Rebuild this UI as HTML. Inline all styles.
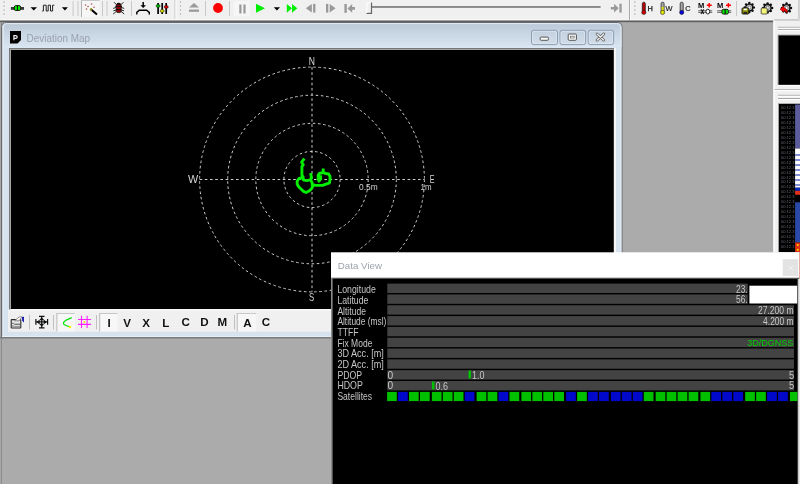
<!DOCTYPE html>
<html><head><meta charset="utf-8">
<style>
html,body{margin:0;padding:0;width:800px;height:484px;overflow:hidden;background:#ababab;}
svg{display:block;position:absolute;left:0;top:0;will-change:transform;}
text{font-family:"Liberation Sans",sans-serif;}
</style></head>
<body>
<svg width="800" height="484" viewBox="0 0 800 484">
<defs>
<linearGradient id="frameg" gradientUnits="userSpaceOnUse" x1="0" y1="24" x2="0" y2="47">
<stop offset="0" stop-color="#bccad8"/><stop offset="1" stop-color="#d9e5f1"/>
</linearGradient>
<linearGradient id="btng" x1="0" y1="0" x2="0" y2="1">
<stop offset="0" stop-color="#c3d0de"/><stop offset="1" stop-color="#d2dde9"/>
</linearGradient>
</defs>

<!-- MDI background -->
<rect x="0" y="0" width="800" height="484" fill="#ababab"/>

<rect x="0.9" y="21" width="1.1" height="463" fill="#8c8c8c"/>
<!-- ===== TOP TOOLBAR ===== -->
<g id="toolbar">
<rect x="0" y="0" width="800" height="19" fill="#f0f0f0"/>
<rect x="0" y="19" width="774" height="1" fill="#f7f7f7"/>
<rect x="0" y="20" width="774" height="1" fill="#a4a4a4"/>
<rect x="0" y="21" width="774" height="1.2" fill="#5f5f5f"/>

<!-- grippers -->
<rect x="4.4" y="2.4" width="1.1" height="1.1" fill="#fdfdfd"/><rect x="3.6" y="1.6" width="1.1" height="1.1" fill="#8c8c8c"/>
<rect x="4.4" y="6.4" width="1.1" height="1.1" fill="#fdfdfd"/><rect x="3.6" y="5.6" width="1.1" height="1.1" fill="#8c8c8c"/>
<rect x="4.4" y="10.4" width="1.1" height="1.1" fill="#fdfdfd"/><rect x="3.6" y="9.6" width="1.1" height="1.1" fill="#8c8c8c"/>
<rect x="4.4" y="14.4" width="1.1" height="1.1" fill="#fdfdfd"/><rect x="3.6" y="13.6" width="1.1" height="1.1" fill="#8c8c8c"/>
<rect x="180.9" y="2.4" width="1.1" height="1.1" fill="#fdfdfd"/><rect x="180.1" y="1.6" width="1.1" height="1.1" fill="#8c8c8c"/>
<rect x="180.9" y="6.4" width="1.1" height="1.1" fill="#fdfdfd"/><rect x="180.1" y="5.6" width="1.1" height="1.1" fill="#8c8c8c"/>
<rect x="180.9" y="10.4" width="1.1" height="1.1" fill="#fdfdfd"/><rect x="180.1" y="9.6" width="1.1" height="1.1" fill="#8c8c8c"/>
<rect x="180.9" y="14.4" width="1.1" height="1.1" fill="#fdfdfd"/><rect x="180.1" y="13.6" width="1.1" height="1.1" fill="#8c8c8c"/>
<rect x="635.2" y="2.4" width="1.1" height="1.1" fill="#fdfdfd"/><rect x="634.4" y="1.6" width="1.1" height="1.1" fill="#8c8c8c"/>
<rect x="635.2" y="6.4" width="1.1" height="1.1" fill="#fdfdfd"/><rect x="634.4" y="5.6" width="1.1" height="1.1" fill="#8c8c8c"/>
<rect x="635.2" y="10.4" width="1.1" height="1.1" fill="#fdfdfd"/><rect x="634.4" y="9.6" width="1.1" height="1.1" fill="#8c8c8c"/>
<rect x="635.2" y="14.4" width="1.1" height="1.1" fill="#fdfdfd"/><rect x="634.4" y="13.6" width="1.1" height="1.1" fill="#8c8c8c"/>
<!-- band separators -->
<rect x="174.5" y="0" width="1" height="19" fill="#c4c4c4"/><rect x="175.5" y="0" width="1" height="19" fill="#fcfcfc"/>
<rect x="629" y="0" width="1" height="20" fill="#a8a8a8"/><rect x="630" y="0" width="1" height="20" fill="#fcfcfc"/>
<rect x="798" y="0" width="1" height="20" fill="#c8c8c8"/>
<!-- separators -->
<g fill="#c8c8c8">
<rect x="72.6" y="1" width="1" height="15"/><rect x="77.5" y="1" width="1" height="15"/>
<rect x="102" y="1" width="1" height="15"/><rect x="106.5" y="1" width="1" height="15"/>
<rect x="131" y="1" width="1" height="15"/>
<rect x="205" y="1" width="1" height="15"/>
<rect x="229" y="1" width="1" height="15"/>
<rect x="736" y="1" width="1" height="15"/>
</g>
<!-- connector icon -->
<rect x="10.9" y="7" width="13.1" height="2.8" fill="#3a3a3a"/>
<rect x="14.3" y="5.6" width="6.3" height="4.9" rx="1.5" fill="#00f000" stroke="#111" stroke-width="0.9"/>
<rect x="16.9" y="5.4" width="1.1" height="5.3" fill="#111"/>
<!-- dropdowns -->
<path d="M30.5,7.2 H37 L33.75,10.4 Z" fill="#000"/>
<path d="M61.9,7.2 H67.9 L64.9,10.4 Z" fill="#000"/>
<path d="M273.8,7.2 H280 L276.9,10.4 Z" fill="#000"/>
<!-- square wave -->
<path d="M42.2,11 H43.4 V5.2 H46.2 V11 H48.2 V5.2 H50.5 V11 H52.6 V5.2 H54.3" fill="none" stroke="#222" stroke-width="1"/>
<!-- pressed wand button -->
<rect x="81" y="0" width="18.4" height="17" fill="#f6f6f6"/>
<rect x="81" y="0" width="1" height="17" fill="#b0b0b0"/><rect x="81" y="0" width="18.4" height="1" fill="#c8c8c8"/>
<g fill="#a85050"><circle cx="85.5" cy="5" r="0.8"/><circle cx="88" cy="6.5" r="0.8"/><circle cx="91.5" cy="4" r="0.8"/><circle cx="94" cy="7.3" r="0.8"/><circle cx="86.5" cy="9" r="0.8"/></g>
<path d="M90.6,9 L97,14.6" stroke="#000" stroke-width="2"/>
<path d="M90.3,8.7 L92,10.2" stroke="#8a8a10" stroke-width="2"/>
<!-- bug -->
<path d="M114,2.2 L116.6,4.8 M123.4,2.2 L120.8,4.8 M113.2,8.4 L116.2,7.4 M124.2,8.4 L121.2,7.4 M113.4,10.8 L116.2,10 M124,10.8 L121.2,10 M113.2,14 L116.4,11.4 M124.2,14 L121,11.4" stroke="#2a2a2a" stroke-width="1"/>
<rect x="116.2" y="3.8" width="5" height="8.8" rx="1.8" fill="#960000" stroke="#111" stroke-width="0.8"/>
<ellipse cx="118.7" cy="3.7" rx="1.9" ry="1" fill="#111"/>
<rect x="115.5" y="5.9" width="6.4" height="1.1" fill="#111"/>
<rect x="116" y="9.1" width="5.4" height="1" fill="#111"/>
<!-- arrow+arc icon -->
<path d="M143.2,2 V6.5" stroke="#000" stroke-width="1.5"/>
<path d="M140.4,5.2 L143.2,7.9 L146,5.2 Z" fill="#000"/>
<path d="M136.8,14.6 V12.4 L139.3,10.3 H146.6 L149.3,12.4 V14.6" fill="none" stroke="#000" stroke-width="1.4"/>
<!-- sliders -->
<path d="M158.1,3 V14 M162.2,3 V14 M166.2,3 V14" stroke="#000" stroke-width="1.7"/>
<ellipse cx="158.1" cy="6" rx="2.1" ry="1.4" fill="#00c000" stroke="#111" stroke-width="0.5"/>
<ellipse cx="162.2" cy="11" rx="2.1" ry="1.4" fill="#e0e000" stroke="#111" stroke-width="0.5"/>
<ellipse cx="166.2" cy="7" rx="2.1" ry="1.4" fill="#e00000" stroke="#111" stroke-width="0.5"/>
<!-- eject -->
<path d="M189,7.6 L194,3 L199,7.6 Z" fill="#999"/>
<rect x="189" y="9.6" width="10" height="2.2" fill="#999"/>
<!-- record -->
<circle cx="218" cy="8" r="4.9" fill="#f00"/>
<!-- pause button -->
<rect x="233.6" y="1" width="16.2" height="15" fill="#f6f6f6"/>
<rect x="239.3" y="4.5" width="2.2" height="9" fill="#999"/>
<rect x="243.4" y="4.5" width="2.2" height="9" fill="#999"/>
<!-- play -->
<path d="M256,3.7 L265,8.2 L256,12.7 Z" fill="#00ee00"/>
<!-- ff -->
<path d="M286.8,3.9 L292,8.35 L286.8,12.8 Z M292,3.9 L297.3,8.35 L292,12.8 Z" fill="#00ee00"/>
<!-- step back -->
<path d="M311.8,3.9 L305.9,8.25 L311.8,12.6 Z" fill="#999"/><rect x="313.1" y="3.9" width="2.3" height="8.7" fill="#999"/>
<!-- step fwd -->
<rect x="326" y="3.9" width="2.3" height="8.7" fill="#999"/><path d="M329.7,3.9 L335.6,8.25 L329.7,12.6 Z" fill="#999"/>
<!-- skip start -->
<rect x="344.4" y="4" width="2.4" height="8.8" fill="#999"/>
<path d="M347.5,8.4 L352.2,3.9 V7.1 H355 V9.7 H352.2 V12.8 Z" fill="#999"/>
<!-- slider -->
<rect x="372" y="6" width="228.6" height="1.9" fill="#888"/>
<path d="M366.5,13.3 H371.5 V2.5" fill="none" stroke="#666" stroke-width="1.2"/>
<path d="M366.8,13 V3 H371" fill="none" stroke="#fff" stroke-width="1"/>
<!-- skip end -->
<path d="M618.7,8.2 L614.1,3.7 V6.9 H610.8 V9.5 H614.1 V12.6 Z" fill="#999"/>
<rect x="619.4" y="3.7" width="2.3" height="8.9" fill="#999"/>
<!-- thermometers -->
<rect x="642.3" y="2.2" width="3" height="10" rx="1.5" fill="#c00000" stroke="#222" stroke-width="0.8"/>

<circle cx="643.8" cy="12.4" r="2.1" fill="#d00000" stroke="#222" stroke-width="0.6"/>
<rect x="661.1" y="2.2" width="3" height="10" rx="1.5" fill="#aaa" stroke="#222" stroke-width="0.8"/>
<rect x="661.6" y="6.8" width="2" height="5.4" fill="#e0e000"/>
<circle cx="662.6" cy="12.4" r="2.1" fill="#e0e000" stroke="#222" stroke-width="0.6"/>
<rect x="680.2" y="2.2" width="3" height="10" rx="1.5" fill="#aaa" stroke="#222" stroke-width="0.8"/>
<circle cx="681.7" cy="12.4" r="2.1" fill="#0000e0" stroke="#222" stroke-width="0.6"/>
<text x="647.6" y="10.7" font-size="7.4" fill="#111" stroke="#111" stroke-width="0.25">H</text>
<text x="665.6" y="10.7" font-size="7.4" fill="#222" stroke="#222" stroke-width="0.2">W</text>
<text x="685.2" y="10.7" font-size="7.4" fill="#222" stroke="#222" stroke-width="0.2">C</text>
<!-- M+ icons -->
<text x="697.9" y="7.8" font-size="7" font-weight="bold" fill="#000" textLength="6.3" lengthAdjust="spacingAndGlyphs">M</text>
<path d="M709.2,3 V7.6 M706.8,5.3 H711.8" stroke="#f00" stroke-width="1.5"/>
<rect x="698.2" y="10.4" width="14" height="0.8" fill="#444"/><rect x="698.2" y="11.9" width="14" height="0.8" fill="#444"/>
<path d="M700.8,9.4 Q702.4,10.2 702.4,11.6 Q702.4,13 700.8,13.8 M703.8,9.4 Q702.6,10.2 702.6,11.6 Q702.6,13 703.8,13.8" fill="none" stroke="#111" stroke-width="1.1"/>
<ellipse cx="707.8" cy="11.6" rx="1.9" ry="2.4" fill="#fff" stroke="#111" stroke-width="0.9"/>
<text x="717.1" y="7.8" font-size="7" font-weight="bold" fill="#000" textLength="6.3" lengthAdjust="spacingAndGlyphs">M</text>
<path d="M728.4,3 V7.6 M726,5.3 H731" stroke="#f00" stroke-width="1.5"/>
<rect x="717.2" y="10.4" width="14" height="0.8" fill="#444"/><rect x="717.2" y="11.9" width="14" height="0.8" fill="#444"/>
<rect x="721.9" y="9.3" width="6.5" height="4.8" rx="1.5" fill="#00e000" stroke="#111" stroke-width="0.9"/>
<rect x="724.6" y="9.2" width="1.1" height="5" fill="#111"/>
<!-- gears -->
<circle cx="749.30" cy="3.10" r="1.25" fill="#111"/>
<circle cx="746.12" cy="4.42" r="1.25" fill="#111"/>
<circle cx="744.80" cy="7.60" r="1.25" fill="#111"/>
<circle cx="746.12" cy="10.78" r="1.25" fill="#111"/>
<circle cx="749.30" cy="12.10" r="1.25" fill="#111"/>
<circle cx="752.48" cy="10.78" r="1.25" fill="#111"/>
<circle cx="753.80" cy="7.60" r="1.25" fill="#111"/>
<circle cx="752.48" cy="4.42" r="1.25" fill="#111"/>
<circle cx="749.3" cy="7.6" r="3.4" fill="#d8d8d8" stroke="#111" stroke-width="1.3"/>
<circle cx="749.3" cy="7.6" r="1.7" fill="#f4f4f4" stroke="#777" stroke-width="0.9"/>
<circle cx="767.60" cy="3.40" r="1.25" fill="#111"/>
<circle cx="764.42" cy="4.72" r="1.25" fill="#111"/>
<circle cx="763.10" cy="7.90" r="1.25" fill="#111"/>
<circle cx="764.42" cy="11.08" r="1.25" fill="#111"/>
<circle cx="767.60" cy="12.40" r="1.25" fill="#111"/>
<circle cx="770.78" cy="11.08" r="1.25" fill="#111"/>
<circle cx="772.10" cy="7.90" r="1.25" fill="#111"/>
<circle cx="770.78" cy="4.72" r="1.25" fill="#111"/>
<circle cx="767.6" cy="7.9" r="3.4" fill="#d8d8d8" stroke="#111" stroke-width="1.3"/>
<circle cx="767.6" cy="7.9" r="1.7" fill="#f4f4f4" stroke="#777" stroke-width="0.9"/>
<circle cx="786.50" cy="3.60" r="1.25" fill="#111"/>
<circle cx="783.32" cy="4.92" r="1.25" fill="#111"/>
<circle cx="782.00" cy="8.10" r="1.25" fill="#111"/>
<circle cx="783.32" cy="11.28" r="1.25" fill="#111"/>
<circle cx="786.50" cy="12.60" r="1.25" fill="#111"/>
<circle cx="789.68" cy="11.28" r="1.25" fill="#111"/>
<circle cx="791.00" cy="8.10" r="1.25" fill="#111"/>
<circle cx="789.68" cy="4.92" r="1.25" fill="#111"/>
<circle cx="786.5" cy="8.1" r="3.4" fill="#d8d8d8" stroke="#111" stroke-width="1.3"/>
<circle cx="786.5" cy="8.1" r="1.7" fill="#f4f4f4" stroke="#777" stroke-width="0.9"/>
<rect x="742" y="8" width="6.8" height="6" rx="0.8" fill="#8c8c00" stroke="#111" stroke-width="0.9"/>
<rect x="743.6" y="8.6" width="3.6" height="1.6" fill="#fff"/>
<rect x="743.6" y="12" width="3.6" height="2" fill="#222"/>
<rect x="761.2" y="8" width="6" height="6" rx="0.8" fill="#f4f47a" stroke="#333" stroke-width="0.8"/>
<path d="M780,9.2 L784,5.8 V7.8 Q787.6,8.6 787.4,12.8 L786.2,12.8 Q785.6,10.5 784,10.4 V12.4 Z" fill="#f00" stroke="#300" stroke-width="0.3"/>
<rect x="798.5" y="0" width="1.5" height="19.5" fill="#d4d4d4"/>
</g>

<!-- ===== DEVIATION MAP WINDOW ===== -->
<g id="devwin">
<path d="M1.5,337.5 V27.5 Q1.5,22.5 6.5,22.5 H617 Q622,22.5 622,27.5 V337.5 Z" fill="#d6e2ee" stroke="#6a6a6a" stroke-width="1"/>
<path d="M2,47 V28 Q2,23 7,23 H616.5 Q621.5,23 621.5,28 V47 Z" fill="url(#frameg)"/>
<rect x="2" y="28" width="1" height="309" fill="#c4ccd6"/>
<path d="M3.3,336 V28 Q3.3,23.6 7.5,23.6 H616.5 Q620.9,23.6 620.9,28 V336" fill="none" stroke="#e2ecf8" stroke-width="1"/>
<rect x="7.4" y="46.6" width="607.6" height="1.2" fill="#dde8f3"/>
<rect x="2" y="336" width="620" height="1" fill="#e6eef6"/>
<rect x="0" y="337" width="623" height="1.5" fill="#7c7c7c"/>

<!-- title icon -->
<path d="M10,31 H21 V40 L17.5,43.5 H10 Z" fill="#000"/>
<path d="M13.9,40.2 V35.6 H15.7 Q17.2,35.6 17.2,37 Q17.2,38.4 15.7,38.4 H14.3" fill="none" stroke="#f0f0f0" stroke-width="1.2"/>
<text x="26.6" y="42" font-size="11.3" fill="#98a2ae" textLength="63.5" lengthAdjust="spacingAndGlyphs">Deviation Map</text>
<!-- caption buttons -->
<g fill="url(#btng)" stroke="#8696ad" stroke-width="0.9">
<rect x="531.5" y="30.3" width="26" height="14.3" rx="2"/>
<rect x="560" y="30.3" width="25.6" height="14.3" rx="2"/>
<rect x="588.2" y="30.3" width="25.4" height="14.3" rx="2"/>
</g>
<g fill="none" stroke="#dfe8f1" stroke-width="0.7">
<rect x="532.6" y="31.4" width="23.8" height="12.1" rx="1.5"/>
<rect x="561.1" y="31.4" width="23.4" height="12.1" rx="1.5"/>
<rect x="589.3" y="31.4" width="23.2" height="12.1" rx="1.5"/>
</g>
<rect x="540.2" y="37.1" width="8.2" height="3.2" rx="1" fill="#fafafa" stroke="#555" stroke-width="1"/>
<rect x="568.2" y="34" width="8.2" height="6.3" rx="1" fill="#fafafa" stroke="#555" stroke-width="1"/>
<rect x="570.4" y="36.2" width="3.8" height="1.8" fill="#fff" stroke="#666" stroke-width="0.7"/>
<path d="M597,34 L603.8,40.2 M603.8,34 L597,40.2" stroke="#555" stroke-width="2.6" stroke-linecap="round"/>
<path d="M597,34 L603.8,40.2 M603.8,34 L597,40.2" stroke="#fafafa" stroke-width="1.2" stroke-linecap="round"/>
<!-- map sunken border -->
<rect x="9" y="48" width="607" height="263" fill="#f6f6f6"/>
<rect x="9" y="48" width="605" height="1" fill="#787878"/>
<rect x="9" y="48" width="1" height="262" fill="#787878"/>
<rect x="10" y="49" width="604" height="1" fill="#a6a6a6"/>
<rect x="10" y="49" width="1" height="261" fill="#a6a6a6"/>
<rect x="11" y="50" width="602.8" height="259" fill="#000"/>

<!-- map content -->
<g fill="none" stroke="#cfcfcf" stroke-width="1" stroke-dasharray="2.6 2.6">
<circle cx="312" cy="179.5" r="28.1"/>
<circle cx="312" cy="179.5" r="56.2"/>
<circle cx="312" cy="179.5" r="84.3"/>
<circle cx="312" cy="179.5" r="112.4"/>
<path d="M199.6,179.5 H424.4"/>
<path d="M312,67.1 V291.9"/>
</g>
<g fill="#d4d4d4" font-size="10.2">
<text x="308.8" y="64.8" textLength="6.2" lengthAdjust="spacingAndGlyphs">N</text>
<text x="188" y="182.9" textLength="10.2" lengthAdjust="spacingAndGlyphs">W</text>
<text x="429.8" y="182.9" textLength="4.8" lengthAdjust="spacingAndGlyphs">E</text>
<text x="308.9" y="300.9" textLength="5.2" lengthAdjust="spacingAndGlyphs">S</text>
</g>
<g fill="#d0d0d0" font-size="9.1">
<text x="359" y="189.8" textLength="18.6" lengthAdjust="spacingAndGlyphs">0.5m</text>
<text x="420.6" y="189.8" textLength="11" lengthAdjust="spacingAndGlyphs">1m</text>
</g>
<path d="M303.5,159.7 L301.6,162.2 L303.3,164.7 L301.9,166.7 L301.9,175 L303.1,177.5 L299,178.5 L297.2,181 L297.2,184.2 L298.7,186.8 L301.2,189.2 L303.6,191.4 L306,192.5 L308.5,191.3 L311,189.3 L312.4,187.2 L312.4,184 L311.6,181.5 L310.4,179.8 L306.5,180.6 L303.3,179.8 L303.1,177.5 M310.9,174.5 L311.4,178 L310.4,179.8 M312.4,184.4 L315,185.4 L319,185.4 L322.5,185.4 L326,184.2 L329.4,183 L330,180 L330,176.5 L328.6,174 L326,173.5 L323.2,172.6 L323.2,170 M323.2,172.6 L319.6,173.2 L318.2,175.2 L318.2,178.6 L319,181.2 L320.6,179 L320.6,176.6" fill="none" stroke="#00ee00" stroke-width="2.9" stroke-linejoin="round" stroke-linecap="square"/>
<!-- map toolbar -->
<rect x="8" y="311" width="606" height="20.7" fill="#f0f0f0"/>
<rect x="8" y="309.5" width="606" height="1.2" fill="#f8f8f8"/>
<!-- properties icon -->
<rect x="11.2" y="319.6" width="9.6" height="8.4" rx="0.6" fill="#e6e6e6" stroke="#2a2a2a" stroke-width="1.1"/>
<rect x="14.2" y="323.6" width="5.8" height="1.5" fill="#7a7a7a"/>
<rect x="14.2" y="326" width="5.8" height="1.1" fill="#9a9a9a"/>
<rect x="12.4" y="322.8" width="1.1" height="1.1" fill="#222"/><rect x="12.4" y="325.4" width="1.1" height="1.1" fill="#222"/>
<path d="M14.6,320.8 L19.2,316.9 H22.2 L19,320.8 Z" fill="#f6f6f6" stroke="#777" stroke-width="0.8"/>
<path d="M22.1,317 L23.9,316.7 V322.8 L22.3,320.4 Z" fill="#0000a8"/>
<rect x="29" y="315" width="1" height="14.5" fill="#c0c0c0"/>
<!-- move icon -->
<path d="M41.7,317 V327.5 M36.5,321.9 H47 M39,316.4 H44.5 M39,327.9 H44.5 M35.9,319 V324.8 M47.6,319 V324.8" stroke="#111" stroke-width="1.2" fill="none"/>
<path d="M41.7,317.2 L39.2,320.2 H44.2 Z M41.7,326.8 L39.2,323.8 H44.2 Z M36.6,321.9 L39.7,319.4 V324.4 Z M46.8,321.9 L43.7,319.4 V324.4 Z" fill="#111"/>
<rect x="53" y="315" width="1" height="14.5" fill="#c0c0c0"/>
<!-- pressed btn 1 -->
<rect x="56.4" y="313" width="18.4" height="18.5" fill="#f7f7f7"/>
<rect x="56.4" y="313" width="1" height="18.5" fill="#b8b8b8"/><rect x="56.4" y="313" width="18.4" height="1" fill="#c8c8c8"/>
<path d="M71.7,317.6 Q68,319 65.5,320.5 Q62.5,322.5 64,324.5 Q66.5,325.8 69.5,326.8" fill="none" stroke="#00e000" stroke-width="1.2"/>
<circle cx="70" cy="327" r="1.3" fill="#f0f000"/>
<!-- grid icon -->
<path d="M81.5,315.8 V328 M87.1,315.8 V328 M78,319.5 H91 M78,324.4 H91" stroke="#ff20ff" stroke-width="1.1"/>
<circle cx="84.4" cy="322" r="1" fill="#e8e000"/>
<rect x="96" y="315" width="1" height="14.5" fill="#c0c0c0"/>
<!-- pressed btn I -->
<rect x="99.2" y="313" width="18.3" height="18.5" fill="#f7f7f7"/>
<rect x="99.2" y="313" width="1" height="18.5" fill="#b8b8b8"/><rect x="99.2" y="313" width="18.3" height="1" fill="#c8c8c8"/>
<rect x="234" y="315" width="1" height="14.5" fill="#c0c0c0"/>
<rect x="236.7" y="313" width="19.5" height="18.5" fill="#f7f7f7"/>
<rect x="236.7" y="313" width="1" height="18.5" fill="#b8b8b8"/><rect x="236.7" y="313" width="19.5" height="1" fill="#c8c8c8"/>
<g font-size="11.6" font-weight="bold" fill="#111">
<text x="107.6" y="327">I</text>
<text x="123.3" y="327">V</text>
<text x="142.3" y="327">X</text>
<text x="162.2" y="327">L</text>
<text x="181.6" y="326.4">C</text>
<text x="200.2" y="326.4">D</text>
<text x="217.6" y="326.4">M</text>
<text x="243.2" y="327.4">A</text>
<text x="261.8" y="326.4">C</text>
</g>


</g>

<!-- ===== RIGHT DOCK PANEL ===== -->
<g id="dock">
<rect x="773.5" y="19.5" width="26.5" height="233" fill="#f0f0f0"/>
<rect x="774.5" y="20" width="25.5" height="0.9" fill="#cfcfcf"/>
<rect x="773.3" y="20.5" width="1.8" height="232" fill="#fcfcfc"/>
<rect x="778" y="26.8" width="22" height="1" fill="#a8a8a8"/>
<rect x="778" y="27.8" width="22" height="1" fill="#ffffff"/>
<rect x="778" y="29.1" width="22" height="1" fill="#a8a8a8"/>
<rect x="778" y="30.1" width="22" height="1" fill="#ffffff"/>
<rect x="777.6" y="34.6" width="22.4" height="51" fill="#a0a0a0"/>
<rect x="778.6" y="35.5" width="21.4" height="49.4" fill="#000"/>
<rect x="777.6" y="84.9" width="22.4" height="1.4" fill="#fcfcfc"/>
<rect x="774.5" y="89" width="25.5" height="1" fill="#b8b8b8"/>
<rect x="774.5" y="90" width="25.5" height="1" fill="#ffffff"/>
<rect x="778" y="94.8" width="22" height="1" fill="#a8a8a8"/>
<rect x="778" y="95.8" width="22" height="1" fill="#ffffff"/>
<rect x="778" y="98" width="22" height="1" fill="#a8a8a8"/>
<rect x="778" y="99" width="22" height="1" fill="#ffffff"/>
<rect x="778" y="103.2" width="22" height="149" fill="#a0a0a0"/>
<rect x="779" y="104" width="21" height="148" fill="#000"/>
<rect x="795.1" y="104.5" width="4.9" height="44" fill="#5c5c9c"/>
<rect x="795.1" y="148.5" width="4.9" height="39.2" fill="#ffffff"/>
<rect x="795.1" y="154.3" width="4.9" height="1.4" fill="#4a5cc0"/>
<rect x="795.1" y="159.3" width="4.9" height="1.4" fill="#4a5cc0"/>
<rect x="795.1" y="164.3" width="4.9" height="1.4" fill="#4a5cc0"/>
<rect x="795.1" y="169.3" width="4.9" height="1.4" fill="#4a5cc0"/>
<rect x="795.1" y="174.3" width="4.9" height="1.4" fill="#4a5cc0"/>
<rect x="795.1" y="179.3" width="4.9" height="1.4" fill="#4a5cc0"/>
<rect x="795.1" y="184.3" width="4.9" height="1.4" fill="#4a5cc0"/>
<rect x="795.1" y="187.7" width="4.9" height="3.1" fill="#0828c0"/>
<rect x="795.1" y="190.8" width="4.9" height="4" fill="#e03018"/>
<rect x="795.1" y="202.3" width="4.9" height="40.2" fill="#2a48a8"/>
<rect x="795.1" y="242.5" width="4.9" height="9.5" fill="#e03010"/>
<circle cx="797.8" cy="245" r="1.1" fill="#f0d000"/>
<circle cx="797.8" cy="249.8" r="1.1" fill="#f0d000"/>
<g font-size="4.2" fill="#62626e" font-family="Liberation Mono">
<text x="781" y="109.20" textLength="13.5" lengthAdjust="spacingAndGlyphs">00:12.3</text>
<text x="781" y="114.15" textLength="13.5" lengthAdjust="spacingAndGlyphs">00:12.3</text>
<text x="781" y="119.10" textLength="13.5" lengthAdjust="spacingAndGlyphs">00:12.3</text>
<text x="781" y="124.05" textLength="13.5" lengthAdjust="spacingAndGlyphs">00:12.3</text>
<text x="781" y="129.00" textLength="13.5" lengthAdjust="spacingAndGlyphs">00:12.3</text>
<text x="781" y="133.95" textLength="13.5" lengthAdjust="spacingAndGlyphs">00:12.3</text>
<text x="781" y="138.90" textLength="13.5" lengthAdjust="spacingAndGlyphs">00:12.3</text>
<text x="781" y="143.85" textLength="13.5" lengthAdjust="spacingAndGlyphs">00:12.3</text>
<text x="781" y="148.80" textLength="13.5" lengthAdjust="spacingAndGlyphs">00:12.3</text>
<text x="781" y="153.75" textLength="13.5" lengthAdjust="spacingAndGlyphs">00:12.3</text>
<text x="781" y="158.70" textLength="13.5" lengthAdjust="spacingAndGlyphs">00:12.3</text>
<text x="781" y="163.65" textLength="13.5" lengthAdjust="spacingAndGlyphs">00:12.3</text>
<text x="781" y="168.60" textLength="13.5" lengthAdjust="spacingAndGlyphs">00:12.3</text>
<text x="781" y="173.55" textLength="13.5" lengthAdjust="spacingAndGlyphs">00:12.3</text>
<text x="781" y="178.50" textLength="13.5" lengthAdjust="spacingAndGlyphs">00:12.3</text>
<text x="781" y="183.45" textLength="13.5" lengthAdjust="spacingAndGlyphs">00:12.3</text>
<text x="781" y="188.40" textLength="13.5" lengthAdjust="spacingAndGlyphs">00:12.3</text>
<text x="781" y="193.35" textLength="13.5" lengthAdjust="spacingAndGlyphs">00:12.3</text>
<text x="781" y="198.30" textLength="13.5" lengthAdjust="spacingAndGlyphs">00:12.3</text>
<text x="781" y="203.25" textLength="13.5" lengthAdjust="spacingAndGlyphs">00:12.3</text>
<text x="781" y="208.20" textLength="13.5" lengthAdjust="spacingAndGlyphs">00:12.3</text>
<text x="781" y="213.15" textLength="13.5" lengthAdjust="spacingAndGlyphs">00:12.3</text>
<text x="781" y="218.10" textLength="13.5" lengthAdjust="spacingAndGlyphs">00:12.3</text>
<text x="781" y="223.05" textLength="13.5" lengthAdjust="spacingAndGlyphs">00:12.3</text>
<text x="781" y="228.00" textLength="13.5" lengthAdjust="spacingAndGlyphs">00:12.3</text>
<text x="781" y="232.95" textLength="13.5" lengthAdjust="spacingAndGlyphs">00:12.3</text>
<text x="781" y="237.90" textLength="13.5" lengthAdjust="spacingAndGlyphs">00:12.3</text>
<text x="781" y="242.85" textLength="13.5" lengthAdjust="spacingAndGlyphs">00:12.3</text>
<text x="781" y="247.80" textLength="13.5" lengthAdjust="spacingAndGlyphs">00:12.3</text>
</g>
</g>

<!-- ===== DATA VIEW WINDOW ===== -->
<g id="dataview">
<rect x="331" y="252.3" width="468" height="26" fill="#fff"/>
<text x="337.8" y="268.7" font-size="9.8" fill="#9ca3ab" textLength="44.2" lengthAdjust="spacingAndGlyphs">Data View</text>
<rect x="782.7" y="259.2" width="15.5" height="16.8" fill="#e3e3e3"/>
<path d="M788.9,265.8 L793.1,270 M793.1,265.8 L788.9,270" stroke="#f2f2f2" stroke-width="1"/>
<rect x="799" y="252.3" width="1" height="28" fill="#e4a8a0"/>

<rect x="331" y="278" width="468" height="206" fill="#000"/>
<rect x="331" y="278" width="1.6" height="206" fill="#8a8a8a"/>
<rect x="331" y="277.6" width="468" height="1" fill="#8a8a8a"/>
<rect x="387.3" y="283.60" width="360.4" height="9.4" fill="#434343"/>
<rect x="387.3" y="294.42" width="360.4" height="9.4" fill="#434343"/>
<rect x="387.3" y="305.24" width="406.7" height="9.4" fill="#434343"/>
<rect x="387.3" y="316.06" width="406.7" height="9.4" fill="#434343"/>
<rect x="387.3" y="326.88" width="406.7" height="9.4" fill="#434343"/>
<rect x="387.3" y="337.70" width="406.7" height="9.4" fill="#434343"/>
<rect x="387.3" y="348.52" width="406.7" height="9.4" fill="#434343"/>
<rect x="387.3" y="359.34" width="406.7" height="9.4" fill="#434343"/>
<rect x="387.3" y="370.16" width="406.7" height="9.4" fill="#434343"/>
<rect x="387.3" y="380.98" width="406.7" height="9.4" fill="#434343"/>
<rect x="748.6" y="284.8" width="49.6" height="19.6" fill="#000"/>
<rect x="749.4" y="285.7" width="47.9" height="17.8" fill="#fff"/>
<g font-size="9.6" fill="#c8c8c8" text-anchor="end">
<text x="747.6" y="292.8" font-size="10.2" textLength="11.6" lengthAdjust="spacingAndGlyphs">23.</text>
<text x="747.6" y="303.4" font-size="10.2" textLength="11.6" lengthAdjust="spacingAndGlyphs">56.</text>
<text x="793.6" y="313.9" font-size="10" textLength="35.6" lengthAdjust="spacingAndGlyphs">27.200 m</text>
<text x="793.6" y="324.8" font-size="10" textLength="30.5" lengthAdjust="spacingAndGlyphs">4.200 m</text>
<text x="794.1" y="378.6" font-size="10.2" textLength="5.2" lengthAdjust="spacingAndGlyphs">5</text>
<text x="794.1" y="389.3" font-size="10.2" textLength="5.2" lengthAdjust="spacingAndGlyphs">5</text>
</g>
<text x="793.4" y="346.4" font-size="9.6" fill="#00d000" text-anchor="end" textLength="46.2" lengthAdjust="spacingAndGlyphs">3D/DGNSS</text>
<g font-size="10.2" fill="#c8c8c8">
<text x="387.6" y="378.7">0</text>
<text x="387.6" y="389.4">0</text>
<text x="472" y="378.8" textLength="12.5" lengthAdjust="spacingAndGlyphs">1.0</text>
<text x="435.5" y="389.5" textLength="12.5" lengthAdjust="spacingAndGlyphs">0.6</text>
</g>
<rect x="468.5" y="370.5" width="2.5" height="8" fill="#00c000"/>
<rect x="432" y="381.5" width="2.5" height="8" fill="#00c000"/>
<g>
<rect x="387.10" y="391.9" width="9.70" height="9.2" fill="#00c000"/>
<rect x="398.07" y="391.9" width="9.70" height="9.2" fill="#0008cc"/>
<rect x="409.04" y="391.9" width="9.70" height="9.2" fill="#00c000"/>
<rect x="420.01" y="391.9" width="9.70" height="9.2" fill="#00c000"/>
<rect x="431.86" y="391.9" width="9.70" height="9.2" fill="#00c000"/>
<rect x="442.83" y="391.9" width="9.70" height="9.2" fill="#00c000"/>
<rect x="453.80" y="391.9" width="9.70" height="9.2" fill="#00c000"/>
<rect x="464.77" y="391.9" width="9.70" height="9.2" fill="#0008cc"/>
<rect x="476.62" y="391.9" width="9.70" height="9.2" fill="#00c000"/>
<rect x="487.59" y="391.9" width="9.70" height="9.2" fill="#00c000"/>
<rect x="498.56" y="391.9" width="9.70" height="9.2" fill="#0008cc"/>
<rect x="509.53" y="391.9" width="9.70" height="9.2" fill="#00c000"/>
<rect x="521.38" y="391.9" width="9.70" height="9.2" fill="#00c000"/>
<rect x="532.35" y="391.9" width="9.70" height="9.2" fill="#00c000"/>
<rect x="543.32" y="391.9" width="9.70" height="9.2" fill="#00c000"/>
<rect x="554.29" y="391.9" width="9.70" height="9.2" fill="#00c000"/>
<rect x="566.14" y="391.9" width="9.70" height="9.2" fill="#0008cc"/>
<rect x="577.11" y="391.9" width="9.70" height="9.2" fill="#00c000"/>
<rect x="588.08" y="391.9" width="9.70" height="9.2" fill="#0008cc"/>
<rect x="599.05" y="391.9" width="9.70" height="9.2" fill="#0008cc"/>
<rect x="610.90" y="391.9" width="9.70" height="9.2" fill="#0008cc"/>
<rect x="621.87" y="391.9" width="9.70" height="9.2" fill="#0008cc"/>
<rect x="632.84" y="391.9" width="9.70" height="9.2" fill="#0008cc"/>
<rect x="643.81" y="391.9" width="9.70" height="9.2" fill="#00c000"/>
<rect x="655.66" y="391.9" width="9.70" height="9.2" fill="#00c000"/>
<rect x="666.63" y="391.9" width="9.70" height="9.2" fill="#00c000"/>
<rect x="677.60" y="391.9" width="9.70" height="9.2" fill="#00c000"/>
<rect x="688.57" y="391.9" width="9.70" height="9.2" fill="#00c000"/>
<rect x="700.42" y="391.9" width="9.70" height="9.2" fill="#00c000"/>
<rect x="711.39" y="391.9" width="9.70" height="9.2" fill="#0008cc"/>
<rect x="722.36" y="391.9" width="9.70" height="9.2" fill="#0008cc"/>
<rect x="733.33" y="391.9" width="9.70" height="9.2" fill="#0008cc"/>
<rect x="745.18" y="391.9" width="9.70" height="9.2" fill="#00c000"/>
<rect x="756.15" y="391.9" width="9.70" height="9.2" fill="#00c000"/>
<rect x="767.12" y="391.9" width="9.70" height="9.2" fill="#0008cc"/>
<rect x="778.09" y="391.9" width="9.70" height="9.2" fill="#0008cc"/>
<rect x="789.94" y="391.9" width="7.66" height="9.2" fill="#00c000"/>
</g>
<rect x="797.8" y="279" width="2.2" height="205" fill="#e8e8e8"/>
<rect x="797.6" y="279" width="0.6" height="205" fill="#555"/>
<g font-size="10.2" fill="#c6c6c6">
<text x="337.4" y="293.10" textLength="38.4" lengthAdjust="spacingAndGlyphs">Longitude</text>
<text x="337.4" y="303.80" textLength="31" lengthAdjust="spacingAndGlyphs">Latitude</text>
<text x="337.4" y="314.50" textLength="28.5" lengthAdjust="spacingAndGlyphs">Altitude</text>
<text x="337.4" y="325.20" textLength="49" lengthAdjust="spacingAndGlyphs">Altitude (msl)</text>
<text x="337.4" y="335.90" textLength="21" lengthAdjust="spacingAndGlyphs">TTFF</text>
<text x="337.4" y="346.60" textLength="35" lengthAdjust="spacingAndGlyphs">Fix Mode</text>
<text x="337.4" y="357.30" textLength="46.4" lengthAdjust="spacingAndGlyphs">3D Acc. [m]</text>
<text x="337.4" y="368.00" textLength="46.4" lengthAdjust="spacingAndGlyphs">2D Acc. [m]</text>
<text x="337.4" y="378.70" textLength="24.7" lengthAdjust="spacingAndGlyphs">PDOP</text>
<text x="337.4" y="389.40" textLength="25.4" lengthAdjust="spacingAndGlyphs">HDOP</text>
<text x="337.4" y="400.10" textLength="34.7" lengthAdjust="spacingAndGlyphs">Satellites</text>
</g>
</g>

</svg>
</body></html>
